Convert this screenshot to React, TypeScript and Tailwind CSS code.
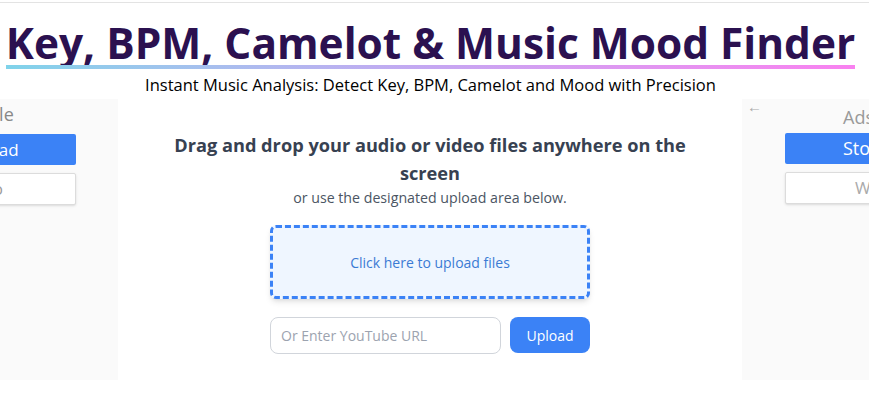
export default function App() {
  return (
    <div className="w-[869px] h-[405px] bg-white overflow-hidden font-['Open_Sans','Noto_Sans',sans-serif]">
      <div className="h-[2px]" />
      <div className="h-px bg-[#e3e3e3]" />
      <div className="flex flex-col items-center pt-[18px] pr-[8px]">
        <div className="inline-flex flex-col">
          <h1 className="text-[42.4px] leading-[44px] font-bold text-[#2b1150] whitespace-nowrap">
            Key, BPM, Camelot &amp; Music Mood Finder
          </h1>
          <div className="h-[4px] bg-gradient-to-r from-[#7fd3ea] via-[#c5a7f2] to-[#f981f0]" />
        </div>
        <p className="mt-[5px] text-[16.5px] leading-[22px] text-black whitespace-nowrap">
          Instant Music Analysis: Detect Key, BPM, Camelot and Mood with Precision
        </p>
      </div>
      <div className="flex mt-[3px] h-[281px]">
        <div className="w-[118px] bg-[#fafafa] overflow-hidden flex justify-end pr-[42px] pt-[3px]">
          <div className="w-[160px] shrink-0 flex flex-col">
            <div className="text-[18px] leading-[24px] text-[#888] text-center">Title</div>
            <div className="mt-[8px] h-[31px] bg-[#3b82f6] rounded-[2px] text-white text-[17px] flex items-center justify-center pr-[12px]">
              Upload
            </div>
            <div className="mt-[8px] h-[32px] bg-white border border-[#dcdcdc] rounded-[2px] shadow-sm text-[#999] text-[16px] flex items-center justify-end pr-[72px]">
              Video
            </div>
          </div>
        </div>
        <div className="flex-1 flex flex-col items-center pt-[32px]">
          <div className="w-[540px] text-center text-[18.2px] leading-[28px] font-bold text-[#374151]">
            Drag and drop your audio or video files anywhere on the screen
          </div>
          <div className="text-[14.2px] leading-[20px] text-[#4b5563] mt-[1px]">
            or use the designated upload area below.
          </div>
          <div className="mt-[17px] w-[320px] h-[74px] border-[3px] border-dashed border-[#3b82f6] rounded-[6px] bg-[#eff6ff] shadow-md flex items-center justify-center text-[14px] text-[#3b7bd4]">
            Click here to upload files
          </div>
          <div className="mt-[18px] flex gap-[9px]">
            <input
              className="w-[231px] h-[37px] border border-[#d1d5db] rounded-[8px] px-[10px] text-[14px] outline-none placeholder:text-[#9ca3af]"
              placeholder="Or Enter YouTube URL"
            />
            <button className="w-[80px] h-[36px] bg-[#3b82f6] rounded-[8px] text-white text-[14px]">
              Upload
            </button>
          </div>
        </div>
        <div className="w-[127px] bg-[#fafafa] overflow-hidden pt-[3px]">
          <div className="flex items-start h-[26px]">
            <span className="pl-[5px] -mt-[3px] text-[15px] leading-[14px] text-[#aaa]">←</span>
            <span className="ml-[81px] pt-[4px] text-[18px] leading-[22px] text-[#999] whitespace-nowrap">Ads</span>
          </div>
          <div className="w-[200px] pl-[43px] flex flex-col">
            <div className="mt-[5px] h-[31px] bg-[#3b82f6] rounded-[2px] text-white text-[18px] flex items-center pl-[58px]">
              Stop
            </div>
            <div className="mt-[8px] h-[32px] bg-white border border-[#dcdcdc] rounded-[2px] shadow-sm text-[#aaa] text-[17px] flex items-center pl-[69px]">
              Wait
            </div>
          </div>
        </div>
      </div>
    </div>
  );
}
